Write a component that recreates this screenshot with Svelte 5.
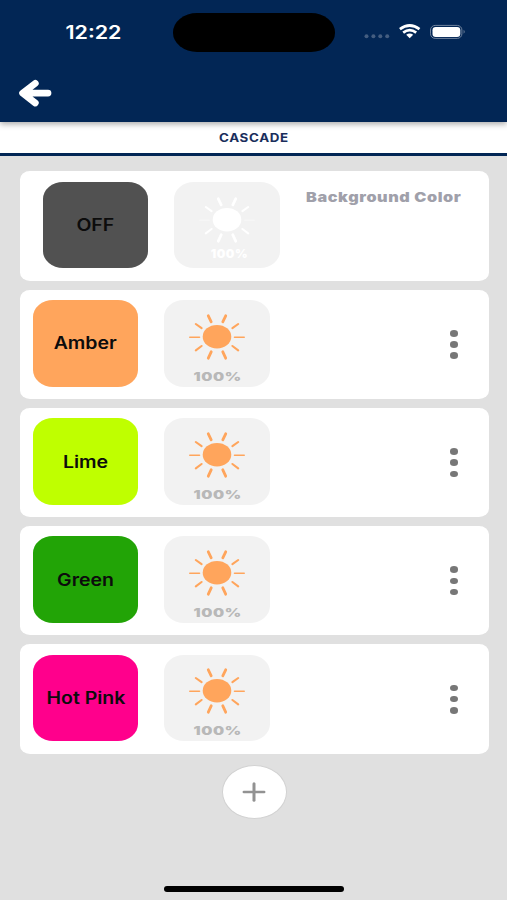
<script lang="ts">
  // Cascade editor: background colour first, then the ordered list of steps.
  interface Step {
    name: string;
    color: string;
    brightness: number;
    background?: boolean;
  }

  const steps: Step[] = [
    { name: 'OFF', color: '#515151', brightness: 100, background: true },
    { name: 'Amber', color: '#ffa55c', brightness: 100 },
    { name: 'Lime', color: '#bfff00', brightness: 100 },
    { name: 'Green', color: '#22a406', brightness: 100 },
    { name: 'Hot Pink', color: '#ff008c', brightness: 100 },
  ];
</script>

<div class="screen">
  <header class="top">
    <div class="status">
      <span class="time"><span class="wide">12:22</span></span>
      <div class="island"></div>
      <svg class="indicators" width="104" height="20" viewBox="0 0 104 20" aria-hidden="true">
        <g fill="#445d80">
          <circle cx="3.5" cy="14.3" r="2" />
          <circle cx="10.4" cy="14.3" r="2" />
          <circle cx="17.3" cy="14.3" r="2" />
          <circle cx="24.2" cy="14.3" r="2" />
        </g>
        <g fill="none" stroke="#fff" stroke-width="2.7">
          <path d="M36.9 7.2Q46.7 -0.2 56.5 7.2" />
          <path d="M40.2 10.6Q46.7 5.6 53.2 10.6" />
        </g>
        <path d="M43.2 12.8Q46.7 10.3 50.2 12.8L46.7 16.2Z" fill="#fff" />
        <rect x="67.5" y="3.4" width="31.4" height="13" rx="4.6" fill="none" stroke="#70839d" stroke-width="1" />
        <rect x="69.5" y="5" width="27.8" height="9.9" rx="3.2" fill="#fff" />
        <path d="M100.6 7.8Q102.8 9.8 100.6 11.8Z" fill="#70839d" />
      </svg>
    </div>
    <button class="back" aria-label="Back">
      <svg width="34" height="29" viewBox="0 0 34 29">
        <path d="M17.3 4.4L4.6 14.1L17.3 24M7 14.1H30" fill="none" stroke="#fff" stroke-width="6.8" stroke-linecap="round" stroke-linejoin="round" />
      </svg>
    </button>
  </header>

  <div class="tab"><span class="wide">CASCADE</span></div>

  <main class="steps">
    {#each steps as step}
      <section class="card" class:background={step.background}>
        <button class="tile swatch" style="background: {step.color}">
          <span class="wide">{step.name}</span>
        </button>
        <button class="tile brightness">
          <svg class="sun" width="58" height="48" viewBox="0 0 58 48" aria-hidden="true">
            <ellipse cx="29" cy="23.7" rx="14.3" ry="11.8" fill="currentColor" />
            <g stroke="currentColor" stroke-linecap="round" fill="none">
              <path class="side" stroke-width="1.6" d="M1.8 24.3H11.5M46.5 24.3H56.2" />
              <path stroke-width="2.1" d="M7.8 11L13.6 15.2M50.2 11L44.4 15.2M7.8 37.3L13.6 33M50.2 37.3L44.4 33" />
              <path stroke-width="2.8" d="M20.3 2.8L23.2 8.8M37.7 2.8L34.8 8.8M20.3 45.2L23.2 38.8M37.7 45.2L34.8 38.8" />
            </g>
          </svg>
          <span class="percent"><span class="wide">{step.brightness}%</span></span>
        </button>
        {#if step.background}
          <p class="caption"><span class="wide">Background Color</span></p>
        {:else}
          <button class="more" aria-label="More options">
            <i></i><i></i><i></i>
          </button>
        {/if}
      </section>
    {/each}
    <button class="add" aria-label="Add color">
      <svg width="24" height="20" viewBox="0 0 24 20">
        <path d="M1.8 10H22.2" stroke="#929292" stroke-width="2.5" stroke-linecap="round" />
        <path d="M12 1.8V18.2" stroke="#929292" stroke-width="3" stroke-linecap="round" />
      </svg>
    </button>
  </main>

  <footer class="home"><div class="bar"></div></footer>
</div>

<style>
  :global(body) {
    margin: 0;
  }
  .screen {
    display: flex;
    flex-direction: column;
    width: 507px;
    height: 900px;
    overflow: hidden;
    background: #e0e0e0;
    font-family: Inter, 'Liberation Sans', sans-serif;
  }
  button {
    display: flex;
    padding: 0;
    border: 0;
    background: none;
    font: inherit;
    color: inherit;
  }
  /* extended letterforms */
  .wide {
    display: inline-block;
    white-space: nowrap;
    transform: scaleX(var(--stretch, 1.2));
  }

  .top {
    flex: none;
    box-sizing: border-box;
    height: 122px;
    padding-top: 13px;
    background: #022655;
    box-shadow: 0 2px 6px rgba(0, 0, 0, 0.35);
    z-index: 1;
  }
  .status {
    display: grid;
    grid-template-columns: 173px 162px 1fr;
    height: 38.5px;
    align-items: center;
  }
  .time {
    --stretch: 1.19;
    padding-left: 14px;
    text-align: center;
    color: #fff;
    font-size: 18px;
    font-weight: 600;
  }
  .island {
    height: 38.5px;
    border-radius: 24px / 19.25px;
    background: #000;
  }
  .indicators {
    margin-left: 27.5px;
  }
  .back {
    margin: 27px 0 0 18px;
  }

  .tab {
    --stretch: 1.13;
    flex: none;
    display: flex;
    align-items: center;
    justify-content: center;
    height: 31px;
    border-bottom: 3px solid #022655;
    background: #fff;
    color: #1a2e5c;
    font-size: 11.8px;
    font-weight: 700;
    letter-spacing: 0.6px;
  }

  .steps {
    flex: 1;
    display: flex;
    flex-direction: column;
    gap: 8.7px;
    padding: 15.4px 18.5px 0 20px;
  }
  .card {
    display: flex;
    align-items: flex-start;
    box-sizing: border-box;
    height: 109.5px;
    padding: 10.5px 0 0 12.8px;
    border-radius: 10px / 8.5px;
    background: #fff;
  }
  .card.background {
    padding-left: 22.5px;
  }
  .tile {
    flex: none;
    align-items: center;
    width: 105.6px;
    height: 86.5px;
    border-radius: 20px / 17px;
  }
  .swatch {
    --stretch: 1.16;
    justify-content: center;
    color: #0c0c0c;
    font-size: 16.8px;
    font-weight: 600;
  }
  .brightness {
    flex-direction: column;
    margin-left: 26px;
    background: #f2f2f2;
    color: #ffa55c;
  }
  .background .brightness {
    color: #fff;
  }
  .sun {
    margin-top: 12.5px;
  }
  .background .sun {
    margin-top: 13.8px;
  }
  .background .side {
    opacity: 0.3;
  }
  .percent {
    --stretch: 1.3;
    margin-top: 8.3px;
    color: #b8b8b8;
    font-size: 12.1px;
    font-weight: 900;
    line-height: 15px;
    letter-spacing: 0.5px;
  }
  .background .percent {
    --stretch: 1;
    margin: 2px 0 0 5px;
    color: #fff;
  }
  .caption {
    --stretch: 1.2;
    flex: 1;
    margin: 7.3px 0 0;
    text-align: center;
    color: #a0a0aa;
    font-size: 13.5px;
    font-weight: 900;
    line-height: 17px;
    letter-spacing: 0.5px;
  }
  .more {
    flex-direction: column;
    gap: 4.6px;
    margin: 30px 31px 0 auto;
  }
  .more i {
    width: 8px;
    height: 6.6px;
    border-radius: 50%;
    background: #777;
  }
  .add {
    align-items: center;
    justify-content: center;
    align-self: center;
    width: 65px;
    height: 53.5px;
    margin-top: 3.1px;
    border: 1px solid #d2d2d2;
    border-radius: 50%;
    background: #fff;
  }

  .home {
    display: flex;
    justify-content: center;
    padding-bottom: 8.5px;
  }
  .bar {
    width: 180px;
    height: 5.5px;
    border-radius: 3px;
    background: #000;
  }
</style>
